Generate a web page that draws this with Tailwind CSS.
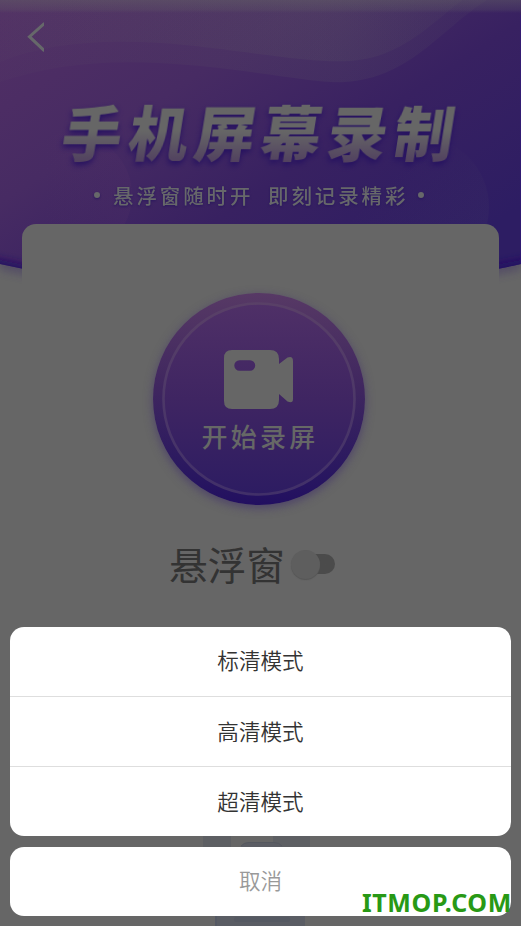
<!DOCTYPE html>
<html lang="zh-CN">
<head>
<meta charset="utf-8">
<meta name="viewport" content="width=device-width, initial-scale=1">
<title>手机屏幕录制</title>
<script src="https://cdn.jsdelivr.net/npm/@tailwindcss/browser@4"></script>
</head>
<body class="bg-[#666666]">
<div class="relative flex h-[926px] w-[521px] flex-col overflow-hidden bg-[#666666] font-['Noto_Sans_CJK_SC',sans-serif]">

  <!-- Banner artwork -->
  <svg class="absolute top-0 left-0" width="521" height="300" viewBox="0 0 521 300">
    <defs>
      <linearGradient id="sky" gradientUnits="userSpaceOnUse" x1="90" y1="-40" x2="330" y2="330">
        <stop offset="0" stop-color="#512f65"/><stop offset=".35" stop-color="#472b63"/><stop offset=".65" stop-color="#382161"/><stop offset="1" stop-color="#2d1d63"/>
      </linearGradient>
      <linearGradient id="wave" x1="0" y1="0" x2="1" y2="0">
        <stop offset="0" stop-color="#666" stop-opacity=".04"/><stop offset=".7" stop-color="#666" stop-opacity=".14"/><stop offset="1" stop-color="#666" stop-opacity=".07"/>
      </linearGradient>
      <linearGradient id="topglow" x1="0" y1="0" x2="0" y2="1">
        <stop offset="0" stop-color="#666" stop-opacity=".42"/><stop offset=".75" stop-color="#666" stop-opacity=".2"/><stop offset="1" stop-color="#666" stop-opacity="0"/>
      </linearGradient>
      <linearGradient id="bubL" x1="0" y1="0" x2="1" y2="0">
        <stop offset=".3" stop-color="#5a3568" stop-opacity="0"/><stop offset="1" stop-color="#5a3568" stop-opacity=".17"/>
      </linearGradient>
      <linearGradient id="bubR" x1="0" y1="0" x2="1" y2="1">
        <stop offset=".3" stop-color="#666" stop-opacity="0"/><stop offset="1" stop-color="#666" stop-opacity=".1"/>
      </linearGradient>
      <filter id="soft4" x="-20%" y="-80%" width="140%" height="260%"><feGaussianBlur stdDeviation="4"/></filter>
      <clipPath id="hero"><path d="M0 0H521V264Q390 293 260 293T0 264Z"/></clipPath>
    </defs>
    <path d="M0 0H521V264Q390 293 260 293T0 264Z" transform="translate(0 6)" fill="#3a2a65" opacity=".4" filter="url(#soft4)"/>
    <g clip-path="url(#hero)">
      <rect width="521" height="300" fill="url(#sky)"/>
      <path d="M0 82C60 62 120 58 200 66C270 73 320 84 345 82C410 78 440 30 487 0H0Z" fill="url(#wave)"/>
      <path d="M0 62C50 42 110 38 185 45C260 53 310 63 350 61C400 58 430 25 462 0H0Z" fill="url(#wave)"/>
      <circle cx="70" cy="195" r="62" fill="url(#bubL)"/>
      <circle cx="418" cy="207" r="71" fill="url(#bubR)"/>
      <path d="M-10 264Q130 295 260 295T531 264" fill="none" stroke="#220f62" stroke-width="12" filter="url(#soft4)"/>
      <rect width="521" height="13" fill="url(#topglow)"/>
      <path d="M521 15V264" stroke="#32168a" stroke-width="2" opacity=".4"/>
    </g>
  </svg>

  <header class="relative flex h-[224px] shrink-0 flex-col">
    <nav class="h-[74px] pt-[21px] pl-[26px]">
      <svg width="18" height="32" viewBox="0 0 18 32" fill="none" stroke="#66686a" stroke-width="3"><path d="M18.500 2.300L3.500 15.700 18.500 29.800"/></svg>
    </nav>
    <h1 class="mt-[12px] ml-[62.500px] h-[90px] w-[420px] -skew-x-[9deg] bg-linear-to-b from-[#666666] from-50% to-[#51415f] to-84% bg-clip-text text-[60px] leading-[88px] font-black tracking-[6.400px] whitespace-nowrap text-transparent drop-shadow-[0_3px_3px_#230f60]">手机屏幕录制</h1>
    <div class="mt-[4px] ml-[94px] flex h-[30px] items-center text-[20.500px] leading-[30px] font-medium tracking-[2.900px] whitespace-nowrap text-[#67686a] drop-shadow-[0_1px_1px_#28165d]">
      <i class="mr-[13px] h-[6px] w-[6px] rounded-full bg-[#67686a]"></i>
      <span class="w-[155px]">悬浮窗随时开</span>
      <span class="w-[150px]">即刻记录精彩</span>
      <i class="h-[6px] w-[6px] rounded-full bg-[#67686a]"></i>
    </div>
  </header>

  <main class="relative mx-[22px] flex w-[477px] grow flex-col items-center rounded-t-[14px] bg-[#666666]">
    <button class="relative mt-[69px] mr-[4px] flex h-[212px] w-[212px] shrink-0 flex-col items-center rounded-full bg-linear-to-b from-[#573965] via-[#3f265f] via-45% to-[#220f60] shadow-[0_3px_10px_#42336bb0]">
      <svg class="absolute top-0 left-0" width="212" height="212" viewBox="0 0 212 212">
        <defs><linearGradient id="disc" x1="0" y1="0" x2="0" y2="1"><stop offset="0" stop-color="#4f3067"/><stop offset=".5" stop-color="#3f2562"/><stop offset="1" stop-color="#2d1c62"/></linearGradient>
        <linearGradient id="ring" x1="0" y1="0" x2="0" y2="1"><stop offset="0" stop-color="#594067"/><stop offset="1" stop-color="#413069"/></linearGradient></defs>
        <circle cx="106" cy="106" r="95.500" fill="url(#disc)" stroke="url(#ring)" stroke-width="2.600"/>
      </svg>
      <svg class="relative mt-[57px]" width="70" height="59" viewBox="0 0 70 59" fill="#666666">
        <path fill-rule="evenodd" d="M8 0H46Q55 0 55 9V14L63.500 7.500Q69 5.500 69 11V49Q69 54 63.500 51.500L55 44V50Q55 59 46 59H8Q0 59 0 51V8Q0 0 8 0ZM15.500 10.300A5.200 5.200 0 0 0 15.500 20.700H26A5.200 5.200 0 0 0 26 10.300Z"/>
      </svg>
      <span class="relative mt-[8px] ml-[3px] text-[26px] leading-[38px] font-medium tracking-[3.300px] whitespace-nowrap text-[#666866]">开始录屏</span>
    </button>

    <div class="mt-[31px] flex h-[56px] items-center self-start pl-[147px]">
      <span class="-mt-[2px] w-[122px] text-[38.700px] leading-[56px] whitespace-nowrap text-[#333333]">悬浮窗</span>
      <div class="flex h-[20px] w-[44px] items-center rounded-full bg-linear-to-r from-transparent from-25% to-[#4b4b4b] to-26%">
        <i class="h-[29px] w-[29px] shrink-0 rounded-full bg-[#5e5e5e] shadow-[0_1px_1px_#555555]"></i>
      </div>
    </div>
  </main>

  <!-- Empty-state illustration behind the sheet -->
  <svg class="absolute top-[830px] left-[200px]" width="115" height="96" viewBox="0 0 115 96">
    <path d="M3 0H31V18H3ZM73 0H110V18H73Z" fill="#5d5f63"/>
    <path d="M40 18Q43 12 49 12H74Q80 12 83 18" fill="#5b5d64"/>
    <path d="M41 16Q44 12.500 49 12.500H74Q79 12.500 82 16" fill="none" stroke="#55585f"/>
    <rect x="15" y="80" width="90" height="16" fill="#5a5d64"/>
    <path d="M16 80V96" stroke="#555964" stroke-width="1.500"/>
    <rect x="34" y="87" width="56" height="5" rx="2.500" fill="#555962"/>
  </svg>

  <!-- Action sheet -->
  <section class="absolute inset-x-[10px] top-[626.500px] flex flex-col gap-[10.500px] text-center text-[21.600px] leading-[32px] font-[350] text-[#333333]">
    <ul class="h-[209.500px] overflow-hidden rounded-[14px] bg-white">
      <li class="flex h-[70px] items-center justify-center border-b border-[#dedede] pb-[2px]">标清模式</li>
      <li class="flex h-[70px] items-center justify-center border-b border-[#dedede] pb-[1px]">高清模式</li>
      <li class="flex h-[70px] items-center justify-center pb-[2px]">超清模式</li>
    </ul>
    <button class="flex h-[69.500px] items-center justify-center rounded-[14px] bg-white pb-[2px] text-[#999999]">取消</button>
  </section>

  <div class="absolute top-[884px] left-[362px] w-[150px] overflow-hidden font-['Noto_Sans','Open_Sans',sans-serif] text-[25px] leading-[36px] font-bold tracking-[0.600px] whitespace-nowrap text-[#289915]">ITMOP.COM</div>
</div>
</body>
</html>
